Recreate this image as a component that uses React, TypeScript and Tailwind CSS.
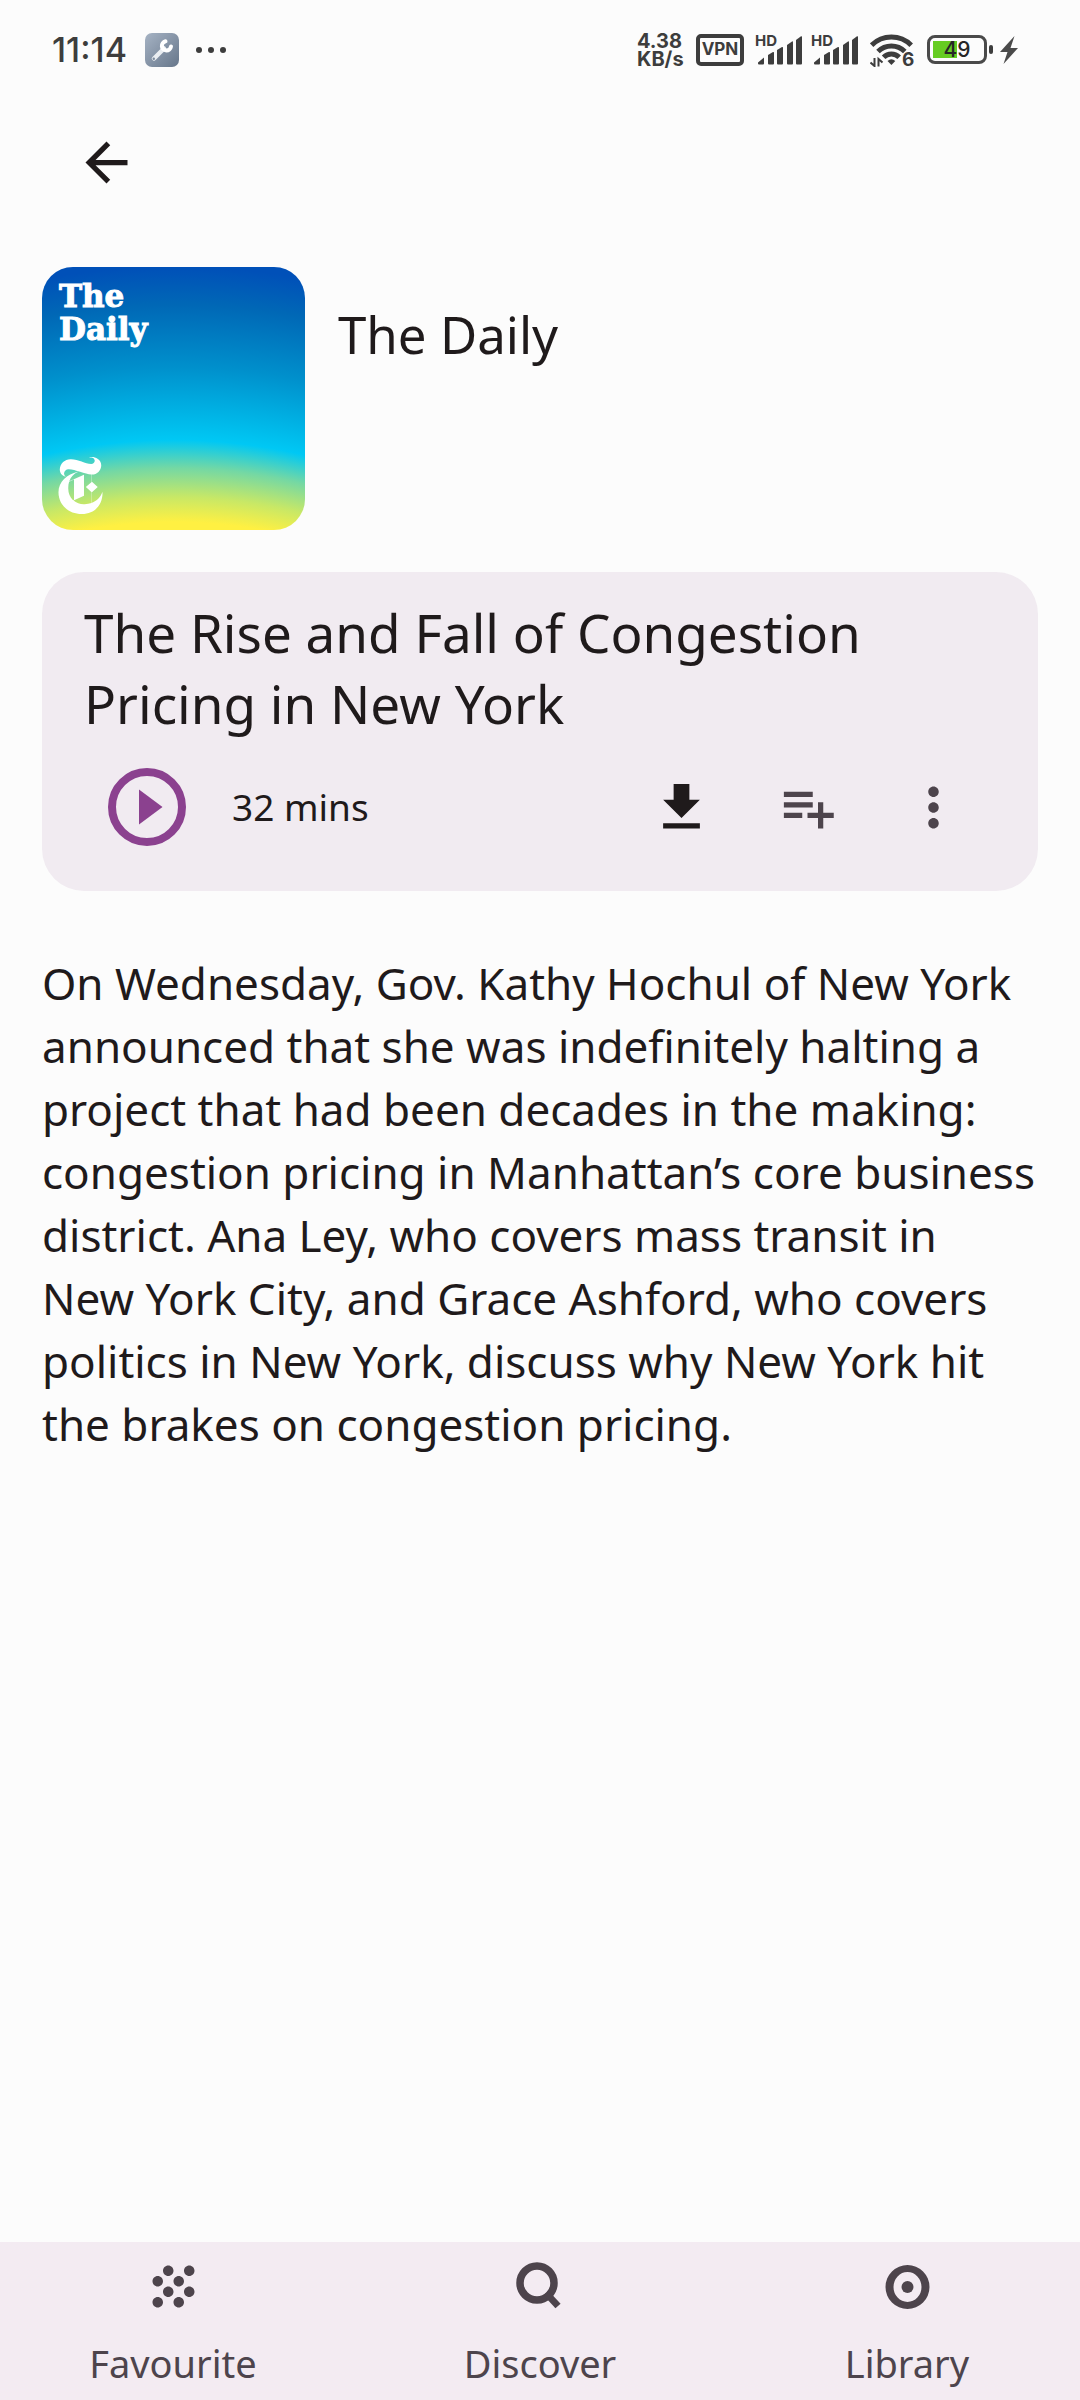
import React from "react";
import { SiNewyorktimes } from "react-icons/si";
import {
  MdArrowBack,
  MdGrain,
  MdMoreVert,
} from "react-icons/md";

function SignalBars() {
  return (
    <div className="relative h-8 w-[46px]">
      <span className="absolute top-[-3px] left-[-1px] text-[15px] leading-5 font-bold">HD</span>
      <svg viewBox="0 0 46 32" className="h-8 w-[46px]" fill="#3d3d3d" aria-hidden="true">
        <path d="M2 28.5 L8 23.5 V29.5 a1 1 0 0 1 -1 1 H3 a1 1 0 0 1 -1 -1z" />
        <path d="M12 21 L17 18 Q18 17.600 18 18.800 V29.500 a1 1 0 0 1 -1 1 H13 a1 1 0 0 1 -1 -1z" />
        <path d="M21 16 L26 13 Q27 12.600 27 13.800 V29.500 a1 1 0 0 1 -1 1 H22 a1 1 0 0 1 -1 -1z" />
        <path d="M31 11 L36 7.500 Q37 7 37 8.300 V29.500 a1 1 0 0 1 -1 1 H32 a1 1 0 0 1 -1 -1z" />
        <path d="M40 6 L45 2.300 Q46 2 46 3 V29.500 a1 1 0 0 1 -1 1 H41 a1 1 0 0 1 -1 -1z" />
      </svg>
    </div>
  );
}

function StatusBar() {
  return (
    <div className="flex h-[99px] shrink-0 items-center justify-between pr-[62px] pl-[52px] font-['Inter',sans-serif] text-[#3d3d3d]">
      <div className="flex items-center">
        <span className="text-[34px] leading-[42px] font-medium">11:14</span>
        <svg viewBox="0 0 34 34" className="ml-[18px] size-[34px]" aria-hidden="true">
          <defs>
            <linearGradient id="tool" x1="0" y1="0" x2="1" y2="1">
              <stop offset="0" stopColor="#a6b3c4" />
              <stop offset="1" stopColor="#66768a" />
            </linearGradient>
          </defs>
          <rect width="34" height="34" rx="7" fill="url(#tool)" />
          <path d="M19 15.500 L9 25.500" stroke="#e9edf1" strokeWidth="4.500" strokeLinecap="round" />
          <path d="M20.500 8.300 A4.600 4.600 0 1 0 26 13.500" fill="none" stroke="#fff" strokeWidth="4" strokeLinecap="round" />
          <circle cx="8.800" cy="25.700" r="1.200" fill="#7b8a9c" />
        </svg>
        <svg viewBox="0 0 30 6" className="ml-[17px] h-1.5 w-[30px]" fill="#3d3d3d" aria-hidden="true">
          <circle cx="3" cy="3" r="3" />
          <circle cx="15" cy="3" r="3" />
          <circle cx="27" cy="3" r="3" />
        </svg>
      </div>
      <div className="flex items-center">
        <div className="w-[48px] text-[20px] leading-[18px] font-bold whitespace-nowrap">
          4.38
          <br />
          KB/s
        </div>
        <div className="ml-[11px] flex h-8 w-[48px] items-center justify-center rounded-[5px] border-4 border-[#3d3d3d] text-[17px] leading-none font-bold">
          VPN
        </div>
        <div className="ml-3">
          <SignalBars />
        </div>
        <div className="ml-2.5">
          <SignalBars />
        </div>
        <div className="relative ml-3 h-[34px] w-11">
          <svg viewBox="0 0 44 34" className="h-[34px] w-11" fill="none" stroke="#3d3d3d" strokeWidth="5" aria-label="Wi-Fi">
            <path d="M1.600 12.200 A28 28 0 0 1 41.200 12.200" />
            <path d="M8 18.600 A19 19 0 0 1 34.800 18.600" />
            <path d="M13.600 24.200 A11 11 0 0 1 29.200 24.200" />
            <path d="M17.500 28 Q21.400 24.500 25.300 28 L21.400 32z" fill="#3d3d3d" stroke="none" />
            <path d="M4.500 25 V33 L0.500 29.500 M8.500 33.500 V26 L12.500 29.500" strokeWidth="2" />
          </svg>
          <span className="absolute top-[15px] left-8 text-[19px] leading-6 font-bold">6</span>
        </div>
        <div className="ml-[13px] flex items-center gap-0.5">
          <div className="flex h-[29px] w-[60px] items-center justify-center rounded-[8px] border-[3px] border-[#4a4a4a] bg-[linear-gradient(#6c2,#6c2)] bg-[length:24px_17px] bg-[position:3px_3px] bg-no-repeat text-[21px] leading-none font-medium text-[#262626]">
            49
          </div>
          <div className="h-[9px] w-1 rounded-sm bg-[#3d3d3d]" />
        </div>
        <svg viewBox="0 0 18 28" className="ml-[7px] h-7 w-[18px]" fill="#4a4a4a" aria-label="Charging">
          <path d="M14.500 0 L0 16 H7.500 L3.500 28 L18 12 H10.500z" />
        </svg>
      </div>
    </div>
  );
}

function Cover() {
  return (
    <div className="flex size-[263px] shrink-0 flex-col justify-between rounded-[31px] bg-[radial-gradient(circle_at_50%_750px,#fff042_495px,#c8e866_520px,#74d8a4_549px,#00c8f4_577px,#0090cc_650px,#0068b6_712px,#0050b8_750px)] pt-[13px] pb-4 pl-2.5 text-white">
      <div className="pl-[7px] font-['DejaVu_Serif',serif] text-[31px] leading-[33px] font-bold [-webkit-text-stroke:1px_white]">
        The
        <br />
        Daily
      </div>
      <SiNewyorktimes className="size-[57px]" />
    </div>
  );
}

const iconButton = "flex size-[126px] items-center justify-center";

function EpisodeCard() {
  return (
    <section className="mt-[42px] rounded-[42px] bg-[#f1ebf1] px-[42px] pt-[25px] pb-[21px]">
      <h2 className="text-[53px] leading-[71px]">The Rise and Fall of Congestion Pricing in New York</h2>
      <div className="mt-[5px] flex items-center">
        <button type="button" aria-label="Play" className={iconButton}>
          <svg viewBox="0 0 78 78" className="size-[78px]">
            <circle cx="39" cy="39" r="35" fill="none" stroke="#8b418f" strokeWidth="8" />
            <path d="M31 21.500 V56.500 L54.500 39z" fill="#8b418f" />
          </svg>
        </button>
        <span className="ml-[22px] flex-1 text-[37px]">32 mins</span>
        <button type="button" aria-label="Download" className={iconButton}>
          <svg viewBox="0 0 24 24" className="size-[63px]" fill="currentColor">
            <path d="M19 9h-4V3H9v6H5l7 7 7-7zM5 18v2h14v-2H5z" />
          </svg>
        </button>
        <button type="button" aria-label="Add to queue" className={iconButton}>
          <svg viewBox="0 0 24 24" className="size-[63px]" fill="#4d444c">
            <path d="M14 10H3v2h11v-2zm0-4H3v2h11V6zm4 8v-4h-2v4h-4v2h4v4h2v-4h4v-2h-4zM3 16h7v-2H3v2z" />
          </svg>
        </button>
        <button type="button" aria-label="More options" className={iconButton}>
          <MdMoreVert className="size-[63px] text-[#4d444c]" />
        </button>
      </div>
    </section>
  );
}

function DiscoverIcon() {
  return (
    <svg viewBox="0 0 63 63" className="size-[63px]" fill="none" stroke="#4d444c">
      <circle cx="28" cy="28" r="17" strokeWidth="7.500" />
      <path d="M37 38 L49 51" strokeWidth="7" />
    </svg>
  );
}

function LibraryIcon() {
  return (
    <svg viewBox="0 0 63 63" className="size-[63px]" fill="#4d444c">
      <path
        fillRule="evenodd"
        d="M31.500 10 a22 22 0 1 1 0 44 a22 22 0 1 1 0 -44z M31.500 17 a14 15 0 1 0 0 30 a14 15 0 1 0 0 -30z"
      />
      <circle cx="31.500" cy="32" r="6" />
    </svg>
  );
}

const tabs = [
  { label: "Favourite", icon: <MdGrain className="size-[63px]" /> },
  { label: "Discover", icon: <DiscoverIcon /> },
  { label: "Library", icon: <LibraryIcon /> },
];

export default function App() {
  return (
    <div className="flex min-h-screen flex-col bg-[#fcfcfc] font-['Noto_Sans',sans-serif] text-[#1f1a1b]">
      <StatusBar />
      <header className="px-[43px]">
        <button type="button" aria-label="Back" className={iconButton}>
          <MdArrowBack className="size-[63px]" />
        </button>
      </header>
      <main className="flex-1 px-[42px] pt-[42px]">
        <div className="flex gap-[33px]">
          <Cover />
          <h1 className="pt-8 text-[51px] leading-[71px]">The Daily</h1>
        </div>
        <EpisodeCard />
        <p className="mt-[61px] text-[44px] leading-[63px]">
          On Wednesday, Gov. Kathy Hochul of New York announced that she was indefinitely halting a project that had been
          decades in the making: congestion pricing in Manhattan’s core business district. Ana Ley, who covers mass
          transit in New&nbsp;York City, and Grace Ashford, who covers politics in New York, discuss why New York hit the
          brakes on congestion pricing.
        </p>
      </main>
      <nav className="grid grid-cols-3 gap-[21px] bg-[#f3ebf2] pt-[13px] pb-[11px] text-[#4d444c]">
        {tabs.map((tab) => (
          <button key={tab.label} type="button" className="flex flex-col items-center gap-[19px] text-[38px] leading-[52px]">
            {tab.icon}
            {tab.label}
          </button>
        ))}
      </nav>
    </div>
  );
}
